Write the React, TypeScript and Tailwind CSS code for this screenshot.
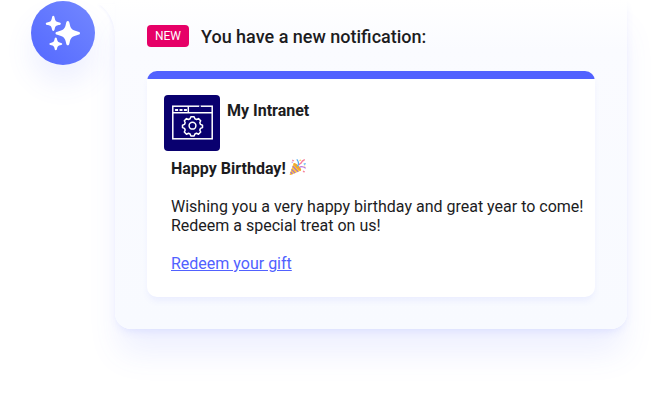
function Sparkles() {
  return (
    <svg className="h-16 w-16" viewBox="31 1 64 64" fill="#fff">
      <path d="M67.8 21 C69 21 69.3 22 69.7 24 C70.5 28.5 72.3 30.2 76.8 31.2 C79 31.8 80 32.1 80 33.2 C80 34.2 79 34.6 76.8 35.2 C72.3 36.3 70.5 38 69.7 42.2 C69.3 44.2 69 45.3 67.8 45.3 C66.6 45.3 66.3 44.2 65.9 42.2 C65.1 38 63.2 36.3 58.8 35.2 C56.6 34.6 55.5 34.2 55.5 33.2 C55.5 32.1 56.6 31.8 58.8 31.2 C63.2 30.2 65.1 28.5 65.9 24 C66.3 22 66.6 21 67.8 21Z" />
      <path d="M53.3 15.8 C54.3 15.8 54.5 17 54.8 18.5 C55.3 21 56.2 21.8 58.6 22.3 C60 22.6 60.8 22.8 60.8 23.7 C60.8 24.5 60 24.8 58.6 25.1 C56.2 25.6 55.3 26.4 54.8 28.6 C54.5 30 54.3 31 53.3 31 C52.3 31 52.1 30 51.8 28.6 C51.3 26.4 50.4 25.6 48 25.1 C46.6 24.8 45.8 24.5 45.8 23.7 C45.8 22.8 46.6 22.6 48 22.3 C50.4 21.8 51.3 21 51.8 18.5 C52.1 17 52.3 15.8 53.3 15.8Z" />
      <path d="M55.8 37.5 C56.7 37.5 56.9 38.3 57.1 39.5 C57.5 41.5 58.3 42.3 60.3 42.7 C61.6 43 62.2 43.2 62.2 44 C62.2 44.8 61.6 45 60.3 45.3 C58.3 45.7 57.5 46.4 57.1 48.3 C56.9 49.5 56.7 50.3 55.8 50.3 C54.9 50.3 54.7 49.5 54.5 48.3 C54.1 46.4 53.3 45.7 51.3 45.3 C50 45 49.4 44.8 49.4 44 C49.4 43.2 50 43 51.3 42.7 C53.3 42.3 54.1 41.5 54.5 39.5 C54.7 38.3 54.9 37.5 55.8 37.5Z" />
    </svg>
  );
}

function IntranetIcon() {
  return (
    <svg className="h-14 w-14 shrink-0 rounded bg-[#09006f]" viewBox="0 0 56 56" fill="none" stroke="#fff" strokeWidth="1.5">
      <rect x="8.8" y="11.2" width="39.4" height="32.6" />
      <path d="M8.8 17.7H48.2M24.3 11.2V17.7" />
      <path d="M11.1 15H22.9" strokeWidth="1.9" strokeDasharray="3 1.4" />
      <path d="M35.2 11.2H36.8" stroke="#09006f" strokeWidth="2" />
      <circle cx="28.5" cy="30.7" r="3.4" />
      <path
        strokeLinejoin="round"
        d="M26.9 21.8h3.2l.8 2 1.6.7 2-.9 2.2 2.2-.9 2 .7 1.6 2 .8v2.4l-2 .8-.7 1.6.9 2-2.2 2.2-2-.9-1.6.7-.8 2h-3.2l-.8-2-1.6-.7-2 .9-2.2-2.2.9-2-.7-1.6-2-.8v-2.4l2-.8.7-1.6-.9-2 2.2-2.2 2 .9 1.6-.7Z"
      />
    </svg>
  );
}

function PartyPopper() {
  return (
    <svg className="-mt-1 ml-[3px] h-[18px] w-[18px]" viewBox="0 0 18 18" fill="none">
      <path d="M4.6 5.1C7.5 5.8 11.3 9.3 12.1 12.6L1.8 17C.9 17.3.5 16.8.8 16Z" fill="#ffc83d" />
      <path d="M3.7 8.2 9.2 13.8M2.6 11.3 6.2 15.1M1.6 14 3.4 16.2" stroke="#a56dd0" strokeWidth="1.2" />
      <ellipse cx="8.4" cy="8.8" rx="1.5" ry="5.1" transform="rotate(-44 8.4 8.8)" fill="#eda833" />
      <path d="M8.2 8.2C10.3 6.5 9.5 3.6 7.8 1.4" stroke="#55aef2" strokeWidth="1.3" />
      <path d="M10.2 7.1C10.5 4.7 12.4 6 12.8 3.9 13 2.5 14.5 3.1 15.6 1.3" stroke="#f77d9b" strokeWidth="1.4" />
      <path d="M10.2 9.6C11.9 8 13.8 8.2 16.7 10.2" stroke="#b878de" strokeWidth="1.3" />
      <path d="m3.5 1.6 1.8.8-.8 1.2-1.5-.8Z" fill="#f7849e" />
      <path d="m10.3 2 1.4-.6.3 1.2-1.2.7Z" fill="#ffc83d" />
      <path d="m14.5 5.5 2.1-.6.2 1.4-1.8.6Z" fill="#62b7f5" />
      <path d="m14.2 12.5 1.8.7-.8 1.5-1.5-.9Z" fill="#f7849e" />
      <circle cx="3.2" cy="4.2" r=".6" fill="#b878de" />
      <circle cx="15.7" cy="8" r=".6" fill="#ffc83d" />
    </svg>
  );
}

export default function App() {
  return (
    <main className="flex h-[405px] w-[658px] items-start overflow-hidden bg-white pl-[31px] font-['Roboto',sans-serif] text-[#1c1c1e]">
      <div className="mt-px h-16 w-16 shrink-0 rounded-full bg-linear-to-tr from-[#5468ff] to-[#7387ff] shadow-[0_18px_28px_rgba(84,104,255,0.10)]">
        <Sparkles />
      </div>
      <section className="relative ml-5 h-[329px] w-[512px] rounded-[16px] rounded-t-none bg-linear-to-b from-white via-[#fafbff] via-15% to-[#f8faff] px-8 pt-6 shadow-[0_28px_32px_-4px_rgba(84,104,255,0.10),0_4px_10px_-3px_rgba(84,104,255,0.16)]">
        <svg className="absolute top-1 -left-4 h-8 w-4 overflow-visible drop-shadow-[-1px_1px_1px_rgba(84,104,255,0.06)]" viewBox="0 0 16 32">
          <defs>
            <linearGradient id="tail" x1="0" y1="0" x2="0" y2="1">
              <stop stopColor="#fff" />
              <stop offset="1" stopColor="#fafbff" />
            </linearGradient>
          </defs>
          <path d="M0 0C9 6 16 18 16 32V0Z" fill="url(#tail)" />
        </svg>
        <header className="flex h-6 items-center">
          <span className="-mt-px flex h-[22px] w-[42px] items-center justify-center rounded bg-[#e60067] text-xs text-white">NEW</span>
          <h1 className="mt-px ml-3 text-[18px] leading-6 font-medium">You have a new notification:</h1>
        </header>
        <article className="mt-[23px] h-[226px] w-[448px] overflow-hidden rounded-[10px] bg-white shadow-[0_5px_6px_-1px_rgba(84,104,255,0.08)]">
          <div className="h-2 bg-[#5161ff]" />
          <div className="flex gap-[7px] pt-4 pl-[17px]">
            <IntranetIcon />
            <h2 className="mt-1.5 text-base leading-5 font-bold">My Intranet</h2>
          </div>
          <div className="pt-2 pl-6 text-base leading-[19px] whitespace-nowrap">
            <div className="flex items-center font-bold">Happy Birthday!<PartyPopper /></div>
            <p className="mt-[19px]">Wishing you a very happy birthday and great year to come!<br />Redeem a special treat on us!</p>
            <a className="mt-[19px] block w-fit text-[#5161ff] underline">Redeem your gift</a>
          </div>
        </article>
      </section>
    </main>
  );
}
